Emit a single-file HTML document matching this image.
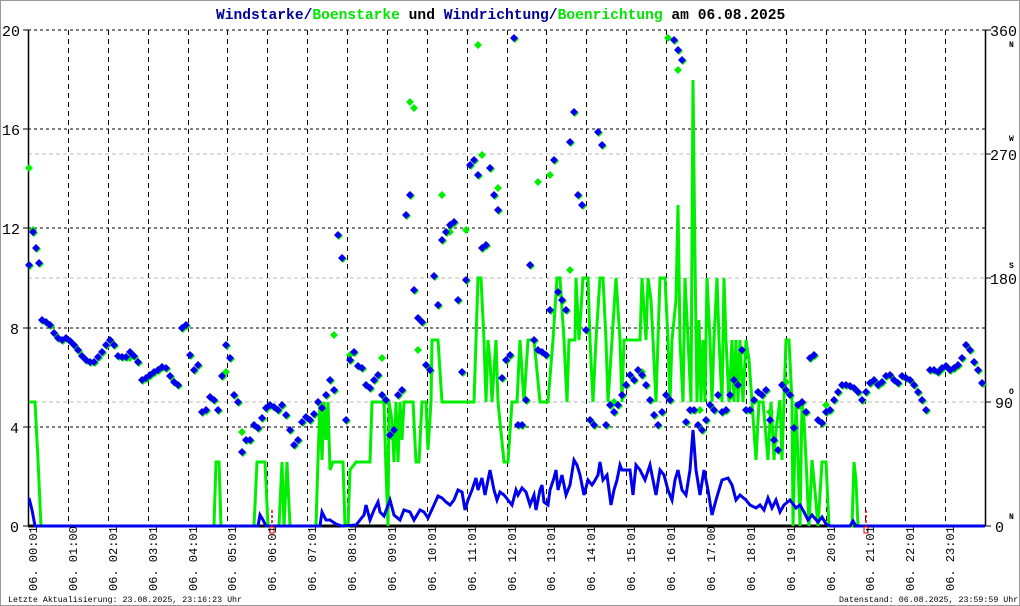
<!DOCTYPE html>
<html><head><meta charset="utf-8"><style>
html,body{margin:0;padding:0;background:#fff}
svg{display:block}
text{font-family:"Liberation Mono",monospace}
</style></head><body>
<svg id="s" width="1020" height="606" viewBox="0 0 1020 606" xmlns="http://www.w3.org/2000/svg">
<rect x="0.5" y="0.5" width="1019" height="605" fill="#fff" stroke="#9a9a9a"/>
<text x="216" y="19" font-size="14.6" font-weight="bold"><tspan fill="#000099">Windstarke/</tspan><tspan fill="#00e600">Boenstarke</tspan><tspan fill="#000"> und </tspan><tspan fill="#000099">Windrichtung/</tspan><tspan fill="#00e600">Boenrichtung</tspan><tspan fill="#000"> am 06.08.2025</tspan></text>
<g id="grid"></g>
<g id="data"></g>
<g font-size="15" fill="#000">
<text x="2" y="36">20</text><text x="2" y="135">16</text><text x="2" y="234">12</text><text x="10" y="334">8</text><text x="10" y="433">4</text><text x="10" y="532">0</text>
<text x="990" y="36">360</text><text x="990" y="160">270</text><text x="990" y="284">180</text><text x="995" y="408">90</text><text x="995" y="532">0</text>
</g>
<g font-size="8" font-weight="bold" fill="#000">
<text x="1009" y="47">N</text><text x="1009" y="141">W</text><text x="1009" y="268">S</text><text x="1009" y="394">O</text><text x="1009" y="519">N</text>
</g>
<g font-size="8.3" fill="#000">
<text x="8" y="602">Letzte Aktualisierung: 23.08.2025, 23:16:23 Uhr</text>
<text x="839" y="602">Datenstand: 06.08.2025, 23:59:59 Uhr</text>
</g>
<g id="lab" font-size="12" fill="#000"></g>
</svg>
<script>
var NS="http://www.w3.org/2000/svg";
function el(p,t,a){var e=document.createElementNS(NS,t);for(var k in a)e.setAttribute(k,a[k]);document.getElementById(p).appendChild(e);return e;}
var L=28,R=985,T=30,B=526,H=(R-L)/24;
[129,228,328,427].forEach(function(y){el("grid","line",{x1:L,x2:R,y1:y,y2:y,stroke:"#000","stroke-dasharray":"3,3","stroke-width":1});});
el("grid","line",{x1:L,x2:R,y1:T,y2:T,stroke:"#000","stroke-dasharray":"3,3"});
[154,278,402].forEach(function(y){el("grid","line",{x1:L,x2:R,y1:y,y2:y,stroke:"#bbb","stroke-dasharray":"4,3"});});
for(var h=1;h<24;h++){var x=Math.round(L+H*h)+0.5;el("grid","line",{x1:x,x2:x,y1:T,y2:B,stroke:"#000","stroke-dasharray":"5,4"});}
el("grid","line",{x1:L+0.5,x2:L+0.5,y1:T,y2:B,stroke:"#000","stroke-width":1.5});
el("grid","line",{x1:R+0.5,x2:R+0.5,y1:T,y2:B,stroke:"#000","stroke-width":1.5});
[30,129,228,328,427,526].forEach(function(y){el("grid","line",{x1:L-5,x2:L,y1:y,y2:y,stroke:"#000"});});
[30,154,278,402,526].forEach(function(y){el("grid","line",{x1:R,x2:R+6,y1:y,y2:y,stroke:"#000"});});
var labs=["00:01","01:00","02:01","03:01","04:01","05:01","06:01","07:01","08:01","09:01","10:01","11:01","12:01","13:01","14:01","15:01","16:01","17:00","18:01","19:01","20:01","21:01","22:01","23:01"];
for(var i=0;i<24;i++){var x=Math.round(L+H*i)+9;var t=el("lab","text",{transform:"translate("+x+",591) rotate(-90)"});t.textContent="06. "+labs[i];}
var g=[29,402,35,402,38,460,41,526,214,526,216,462,219,462,221,526,254,526,257,462,265,462,268,526,279,526,282,462,284,526,287,462,290,526,316,526,318,460,320,402,322,460,324,402,326,440,328,402,330,470,333,462,343,462,345,526,348,526,350,470,356,462,370,462,372,402,384,402,386,470,388,526,389,402,392,420,394,462,396,402,398,462,400,402,402,440,404,402,413,402,416,462,419,462,422,402,426,402,428,450,431,402,432,340,438,340,442,402,474,402,476,340,478,278,481,278,484,340,486,402,488,340,490,360,492,402,496,340,498,402,504,462,508,462,512,402,517,402,520,340,524,402,528,340,534,340,540,402,548,402,553,340,557,278,560,278,564,340,567,402,569,340,575,340,576,278,579,340,583,278,588,278,590,340,593,402,596,340,600,278,603,278,606,340,608,402,612,340,616,278,620,340,622,402,624,340,640,340,642,278,646,340,648,278,651,300,653,340,656,402,658,340,660,278,665,278,668,340,670,402,672,340,676,300,678,205,680,340,683,402,685,278,688,340,691,402,693,80,695,260,697,402,699,320,701,402,703,340,705,402,707,278,710,340,712,402,714,340,717,278,719,340,722,402,724,278,726,340,729,402,732,340,734,402,736,340,738,402,740,340,743,402,746,340,749,360,752,402,756,460,759,402,763,402,768,460,771,402,774,460,776,430,780,400,782,460,786,340,789,340,792,402,793,526,796,402,798,460,800,526,802,402,804,420,806,460,809,526,812,460,814,480,818,526,822,462,826,462,829,526,852,526,854,462,856,480,858,526,985,526];
var w=[29,498,32,510,35,526,258,526,260,515,263,520,266,526,320,526,322,512,326,520,330,520,336,524,342,526,356,525,360,520,364,515,366,505,370,520,374,510,378,502,380,512,384,516,390,500,394,515,400,520,404,510,410,512,414,520,420,510,424,512,428,518,434,505,438,496,442,498,446,502,450,505,454,500,458,490,462,492,465,510,468,500,472,490,476,478,478,490,482,478,485,495,490,470,494,490,497,500,500,492,504,495,508,500,512,505,516,490,518,495,522,488,526,492,530,505,534,495,536,510,540,490,542,485,544,502,548,505,550,490,554,478,556,470,558,490,562,475,566,495,570,485,574,460,577,465,580,475,584,495,588,480,592,485,594,482,598,475,600,462,603,480,607,475,611,505,614,490,617,480,620,465,622,470,630,470,633,495,636,465,640,470,645,480,650,465,652,475,656,495,660,470,664,475,668,490,672,500,675,480,678,470,682,490,686,495,690,470,693,430,696,470,700,495,704,470,708,490,712,515,716,500,722,480,728,478,732,485,736,500,740,495,746,500,750,505,756,508,760,505,764,510,768,498,772,508,776,500,780,512,784,505,790,500,796,508,800,505,804,512,808,520,812,515,818,522,822,517,826,524,830,526,850,526,853,521,856,526,985,526];
el("data","line",{x1:L,x2:R,y1:526,y2:526,stroke:"#000",'stroke-width':3});
el("data","polyline",{points:g.join(" "),fill:"none",stroke:"#00ee00","stroke-width":3,"stroke-linejoin":"miter"});
el("data","polyline",{points:w.join(" "),fill:"none",stroke:"#0000ee","stroke-width":3});
var d=[29,265,33,232,36,248,39,263,42,320,46,322,50,325,54,333,58,338,62,340,66,338,70,341,74,345,78,350,82,356,86,360,90,362,94,362,98,357,102,352,106,345,110,340,114,345,118,356,122,357,126,357,130,352,134,356,138,362,142,380,146,378,150,375,154,372,158,370,162,367,166,368,170,376,174,382,178,385,182,328,186,325,190,355,194,370,198,365,202,412,206,410,210,397,214,400,218,410,222,376,226,345,230,358,234,395,238,402,242,452,246,440,250,440,254,425,258,428,262,418,266,408,270,405,274,407,278,410,282,405,286,415,290,430,294,445,298,440,302,422,306,417,310,420,314,414,318,402,322,408,326,395,330,380,334,390,338,235,342,258,346,420,350,360,354,352,358,366,362,368,366,385,370,388,374,380,378,375,382,395,386,400,390,435,394,430,398,395,402,390,406,215,410,195,414,290,418,318,422,322,426,365,430,370,434,276,438,305,442,240,446,232,450,225,454,222,458,300,462,372,466,280,470,165,474,160,478,175,482,248,486,245,490,168,494,195,498,210,502,378,506,360,510,355,514,38,518,425,522,425,526,400,530,265,534,340,538,350,542,352,546,355,550,310,554,160,558,292,562,300,566,310,570,142,574,112,578,195,582,205,586,330,590,420,594,425,598,132,602,145,606,425,610,405,614,412,618,405,622,395,626,385,630,375,634,380,638,370,642,375,646,385,650,400,654,415,658,425,662,412,666,395,670,400,674,40,678,50,682,60,686,422,690,410,694,410,698,425,702,430,706,420,710,405,714,410,718,395,722,412,726,410,730,395,734,380,738,385,742,350,746,410,750,410,754,400,758,392,762,395,766,390,770,420,774,440,778,450,782,385,786,390,790,395,794,428,798,405,802,402,806,412,810,358,814,355,818,420,822,423,826,412,830,410,834,400,838,392,842,385,846,385,850,386,854,388,858,392,862,400,866,392,870,383,874,380,878,385,882,382,886,376,890,375,894,380,898,383,902,376,906,378,910,380,914,385,918,392,922,400,926,410,930,370,934,370,938,372,942,368,946,366,950,370,954,368,958,365,962,358,966,345,970,350,974,362,978,370,982,383];
var ex=[29,168,33,230,414,108,410,102,442,195,466,230,482,155,478,45,498,188,538,182,550,175,570,270,668,38,678,70,242,432,334,335,350,355,382,358,418,350,226,372,130,358,450,232,614,402,642,372,700,410,770,412,786,382,826,405];
function dia(x,y,c){el("data","polygon",{points:(x)+","+(y-4)+" "+(x+4)+","+y+" "+x+","+(y+4)+" "+(x-4)+","+y,fill:c});}
for(var i=0;i<ex.length;i+=2)dia(ex[i],ex[i+1],"#00ee00");
for(var i=0;i<d.length;i+=2)dia(d[i]+1,d[i+1]+1,"#00ee00");
for(var i=0;i<d.length;i+=2)dia(d[i],d[i+1],"#0000ee");
[272,866].forEach(function(x){el("data","line",{x1:x,x2:x,y1:510,y2:526,stroke:"#e00","stroke-dasharray":"3,2","stroke-width":1.5});el("data","rect",{x:x-2,y:527,width:4,height:6,fill:"none",stroke:"#e00"});});
</script>
</body></html>
